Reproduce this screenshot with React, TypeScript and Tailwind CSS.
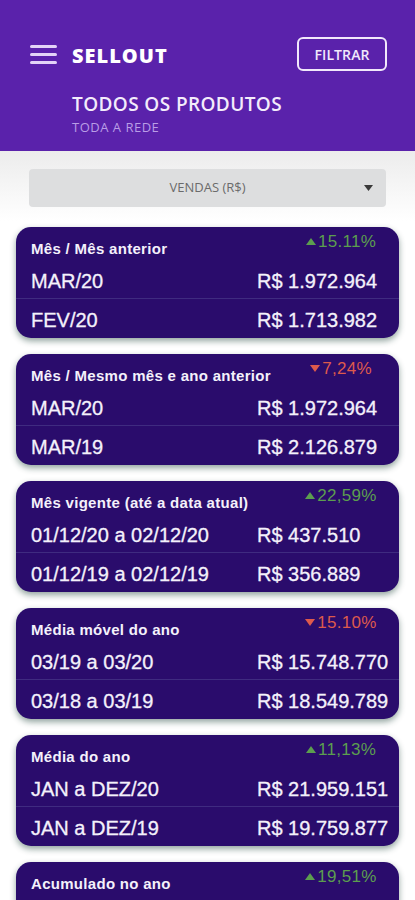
import { useState } from "react";

type Row = { label: string; value: string };

type Metric = {
  title: string;
  change: string;
  up: boolean;
  rows: Row[];
};

const metrics: Metric[] = [
  {
    title: "Mês / Mês anterior",
    change: "15.11%",
    up: true,
    rows: [
      { label: "MAR/20", value: "R$ 1.972.964" },
      { label: "FEV/20", value: "R$ 1.713.982" },
    ],
  },
  {
    title: "Mês / Mesmo mês e ano anterior",
    change: "7,24%",
    up: false,
    rows: [
      { label: "MAR/20", value: "R$ 1.972.964" },
      { label: "MAR/19", value: "R$ 2.126.879" },
    ],
  },
  {
    title: "Mês vigente (até a data atual)",
    change: "22,59%",
    up: true,
    rows: [
      { label: "01/12/20 a 02/12/20", value: "R$ 437.510" },
      { label: "01/12/19 a 02/12/19", value: "R$ 356.889" },
    ],
  },
  {
    title: "Média móvel do ano",
    change: "15.10%",
    up: false,
    rows: [
      { label: "03/19 a 03/20", value: "R$ 15.748.770" },
      { label: "03/18 a 03/19", value: "R$ 18.549.789" },
    ],
  },
  {
    title: "Média do ano",
    change: "11,13%",
    up: true,
    rows: [
      { label: "JAN a DEZ/20", value: "R$ 21.959.151" },
      { label: "JAN a DEZ/19", value: "R$ 19.759.877" },
    ],
  },
  {
    title: "Acumulado no ano",
    change: "19,51%",
    up: true,
    rows: [
      { label: "JAN a MAR/20", value: "R$ 5.812.430" },
      { label: "JAN a MAR/19", value: "R$ 4.863.512" },
    ],
  },
];

function Change({ value, up }: { value: string; up: boolean }) {
  return (
    <div
      className={`flex w-[84px] items-center justify-center gap-[2px] text-[17px] leading-[18px] tracking-[0.3px] ${
        up ? "text-[#5c9e4f]" : "text-[#de5a4c]"
      }`}
    >
      <svg width="10" height="7" viewBox="0 0 10 7" className="mb-[1px]">
        {up ? <polygon points="5,0 10,7 0,7" fill="currentColor" /> : <polygon points="0,0 10,0 5,7" fill="currentColor" />}
      </svg>
      {value}
    </div>
  );
}

function MetricCard({ metric }: { metric: Metric }) {
  return (
    <div className="flex h-[111px] shrink-0 flex-col overflow-hidden rounded-[15px] bg-[#2a0c6c] text-[#f4f1fb] shadow-[0_3px_6px_rgba(10,50,40,0.45)]">
      <div className="flex h-[36px] items-start justify-between pl-[15px] pr-[16px] pt-[6px]">
        <div className="mt-[7px] text-[15px] font-bold leading-[18px] tracking-[0.3px]">{metric.title}</div>
        <Change value={metric.change} up={metric.up} />
      </div>
      <div className="grid h-[35px] grid-cols-[226px_1fr] items-center pl-[15px] text-[20px] leading-[22px] [-webkit-text-stroke:0.3px_#f4f1fb]">
        <span>{metric.rows[0].label}</span>
        <span>{metric.rows[0].value}</span>
      </div>
      <div className="h-px bg-[#3f2b80]" />
      <div className="grid flex-1 grid-cols-[226px_1fr] items-center pl-[15px] pt-[3px] text-[20px] leading-[22px] [-webkit-text-stroke:0.3px_#f4f1fb]">
        <span>{metric.rows[1].label}</span>
        <span>{metric.rows[1].value}</span>
      </div>
    </div>
  );
}

export default function App() {
  const [metric] = useState<string>("VENDAS (R$)");

  return (
    <div className="h-[900px] w-full overflow-hidden bg-white font-['Liberation_Sans',Arial,sans-serif]">
      <header className="h-[151px] bg-[#5a22ab] font-['Open_Sans',sans-serif] text-white">
        <div className="flex items-center justify-between pl-[30px] pr-[28px] pt-[37px]">
          <div className="flex items-center gap-[15px]">
            <button type="button" className="flex w-[27px] flex-col gap-[5px]">
              <span className="h-[3px] rounded-full bg-[#e3d3f7]" />
              <span className="h-[3px] rounded-full bg-[#e3d3f7]" />
              <span className="h-[3px] rounded-full bg-[#e3d3f7]" />
            </button>
            <div className="pt-[3px] text-[20px] font-extrabold leading-[24px] tracking-[1px]">SELLOUT</div>
          </div>
          <button
            type="button"
            className="flex h-[34px] w-[90px] items-center justify-center rounded-[6px] border-2 border-[#f1e8fb] text-[14px] font-semibold tracking-[0.1px] text-[#f1e8fb]"
          >
            FILTRAR
          </button>
        </div>
        <div className="pl-[72px] pt-[22px]">
          <div className="text-[19px] font-semibold leading-[23px] tracking-[0.4px] text-[#f3ecfb]">TODOS OS PRODUTOS</div>
          <div className="mt-[3px] text-[13px] leading-[16px] tracking-[0.5px] text-[#b99de6]">TODA A REDE</div>
        </div>
      </header>

      <main className="bg-[linear-gradient(#ececec,#ffffff_70px)] px-4 pt-[18px]">
        <div className="relative mx-[13px] flex h-[38px] items-center justify-center rounded-[4px] bg-[#dddedf] font-['Open_Sans',sans-serif] text-[13px] text-[#6b6b6b]">
          {metric}
          <svg width="9" height="6" viewBox="0 0 9 6" className="absolute right-[13px] top-[16px]">
            <polygon points="0,0 9,0 4.5,6" fill="#3a3a3a" />
          </svg>
        </div>

        <div className="mt-[20px] flex flex-col gap-4 pb-6">
          {metrics.map((m) => (
            <MetricCard key={m.title} metric={m} />
          ))}
        </div>
      </main>
    </div>
  );
}
